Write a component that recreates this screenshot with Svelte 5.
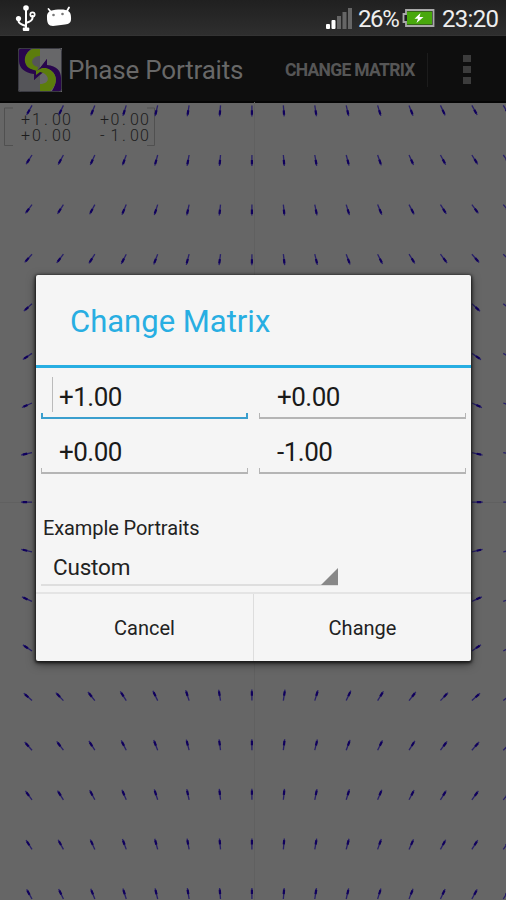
<script>
  const examples = ['Custom'];

  let matrix = ['+1.00', '+0.00', '+0.00', '-1.00'];
  let focused = 0;

  const plot = { width: 506, height: 798, top: 102 };
  const origin = { x: 253.7, y: 400.3 };
  const arrowLength = 11;

  // x positions of each glyph in the matrix readout
  const columnX = [
    [21, 32, 44, 52, 62],
    [100, 110.5, 122, 130, 140]
  ];

  function buildArrows() {
    const list = [];
    for (let row = 0; row <= 16; row++) {
      for (let col = 0; col <= 15; col++) {
        const x = 32 + col * 31.42;
        const y = 3.4 + row * 49.6;
        const dx = x - origin.x;
        const dy = origin.y - y;
        const size = Math.hypot(dx, dy) || 1;
        const ux = (dx / size) * arrowLength;
        const uy = (dy / size) * arrowLength;
        list.push({ x, y, mx: x + ux * 0.45, my: y + uy * 0.45, hx: x + ux * 0.85, hy: y + uy * 0.85, ex: x + ux, ey: y + uy });
      }
    }
    return list;
  }

  const arrows = buildArrows();
</script>

<div class="screen">
  <header class="status-bar">
    <div class="status-icons">
      <svg class="usb" width="22" height="28" viewBox="0 0 22 28">
        <path d="M11 4v20M3.500 15.500v1.500q0 3 7.500 5M17.500 11v3q0 3-6.500 5" fill="none" stroke="#fff" stroke-width="2" />
        <circle cx="11" cy="4" r="2.800" fill="#fff" />
        <circle cx="3.500" cy="14.500" r="2.600" fill="#fff" />
        <circle cx="17.500" cy="10.500" r="2.200" fill="none" stroke="#fff" stroke-width="1.700" />
        <rect x="7.800" y="23.500" width="6.500" height="3.500" rx="1" fill="#fff" />
      </svg>
      <svg class="droid" width="28" height="22" viewBox="0 0 28 22">
        <path d="M3.500 3 6 6M24 1.500 22 5" stroke="#fff" stroke-width="1.800" stroke-linecap="round" />
        <path d="M2 12C1.500 6 5 4 13 3.600C22 3 26 5 26 11C26.500 17 24 18 20 18.500L8 20C3.500 20 2 17 2 12Z" fill="#fff" />
        <circle cx="8.500" cy="9" r="1.300" fill="#777" />
        <circle cx="17.500" cy="8" r="1.300" fill="#777" />
      </svg>
    </div>
    <div class="status-info">
      <svg class="signal" width="28" height="22" viewBox="0 0 28 22">
        <rect x="1" y="16" width="4" height="5" rx="1" fill="#fff" />
        <rect x="6.500" y="12" width="4" height="9" rx="1" fill="#fff" />
        <rect x="12" y="8" width="4" height="13" fill="#666" />
        <rect x="17.500" y="4" width="4" height="17" fill="#666" />
        <rect x="23" y="0" width="4" height="21" fill="#666" />
      </svg>
      <span class="percent">26%</span>
      <svg class="battery" width="33" height="18" viewBox="0 0 33 18">
        <path d="M4 1H31.500V17H4V13H1.500V5H4Z" fill="#222" stroke="#aaa" stroke-width="1.800" />
        <rect x="5" y="2.500" width="25" height="13" fill="#48a80c" />
        <path d="M18.500 4 12.500 9.800H16L14.500 14 21.500 8H17.500Z" fill="#fff" />
      </svg>
      <span class="clock">23:20</span>
    </div>
  </header>

  <div class="action-bar">
    <svg class="logo" width="44" height="44" viewBox="0 0 44 44">
      <rect width="44" height="44" rx="2" fill="#555559" />
      <rect x="22" width="22" height="44" fill="#676769" />
      <path d="M1 1H13C5 7 6 18 14 21L20 23L29 11V21L16 32V26C7 25 1 20 1 13Z" fill="#29064d" />
      <path d="M22 1H15C4 5 5 18 13 21L19 23L20 19C11 17 13 8 22 8Z" fill="#5c7d0c" />
      <path d="M29 11V17C39 18 43 23 43 30V43H34C40 34 39 24 30 21L25 21L16 32V26L22 20Z" fill="#29064d" />
      <path d="M24 20H28C40 24 41 36 32 43H22V36C33 36 32 26 22 24L18 27V23Z" fill="#5c7d0c" />
      <rect x="0.500" y="0.500" width="43" height="43" rx="2" fill="none" stroke="#3a3a42" />
    </svg>
    <h1>Phase Portraits</h1>
    <button class="menu-action">CHANGE MATRIX</button>
    <button class="overflow" aria-label="More options">
      <i></i><i></i><i></i>
    </button>
  </div>

  <svg class="plot" width={plot.width} height={plot.height} viewBox="0 0 {plot.width} {plot.height}">
    <path class="axis" d="M0 400.500H506M254.500 0V798" />
    <g class="readout">
      <path d="M13 6H4.500V43.500H13M147 6H154.500V43.500H147" />
      {#each matrix as value, i}
        <text x={columnX[i % 2].join(' ')} y={i < 2 ? 22.500 : 39}>{value}</text>
      {/each}
    </g>
    {#each arrows as a}
      <line class="shaft" x1={a.x} y1={a.y} x2={a.ex} y2={a.ey} />
      <line class="head" x1={a.mx} y1={a.my} x2={a.hx} y2={a.hy} />
    {/each}
  </svg>

  <div class="overlay">
    <div class="dialog" role="dialog" aria-label="Change Matrix">
      <h2>Change Matrix</h2>
      <div class="body">
        <div class="fields">
          {#each matrix as value, i}
            <div class="field" class:focused={i === focused}>
              <span>{value}</span>
            </div>
          {/each}
        </div>
        <div class="label">Example Portraits</div>
        <div class="spinner">
          <span>{examples[0]}</span>
          <svg width="17" height="17" viewBox="0 0 17 17"><path d="M17 0V17H0Z" fill="#888" /></svg>
        </div>
      </div>
      <div class="buttons">
        <button>Cancel</button>
        <button>Change</button>
      </div>
    </div>
  </div>
</div>

<style>
  :global(body) {
    margin: 0;
    background: #666;
  }

  .screen {
    position: relative;
    width: 506px;
    height: 900px;
    overflow: hidden;
    font-family: Roboto, sans-serif;
    background: #666;
  }

  h1,
  h2 {
    margin: 0;
    font-weight: 400;
  }

  button {
    border: 0;
    padding: 0;
    background: none;
    font-family: inherit;
  }

  .status-bar {
    display: flex;
    justify-content: space-between;
    box-sizing: border-box;
    height: 36px;
    padding: 0 8px 0 15px;
    background: linear-gradient(#202020, #2e2e2e);
    border-bottom: 1px solid #333;
  }

  .status-icons {
    display: flex;
    gap: 8px;
  }

  .usb {
    margin-top: 4px;
  }

  .droid {
    margin-top: 6px;
  }

  .status-info {
    display: flex;
    align-items: center;
    height: 38px;
    color: #eee;
    font-size: 24px;
  }

  .signal {
    margin-right: 5px;
  }

  .percent {
    width: 44px;
    letter-spacing: -1.4px;
  }

  .battery {
    width: 33px;
    margin-right: 7px;
    margin-top: -2px;
  }

  .clock {
    width: 56px;
    letter-spacing: -0.7px;
  }

  .action-bar {
    display: flex;
    align-items: center;
    box-sizing: border-box;
    height: 67px;
    margin-bottom: -1px;
    padding: 2px 0 0 18px;
    background: #0e0e0e;
    border-bottom: 2px solid #050505;
  }

  .logo {
    margin-right: 6px;
  }

  h1 {
    width: 217px;
    color: #686868;
    font-size: 26px;
    letter-spacing: -0.2px;
    line-height: 36px;
    white-space: nowrap;
  }

  .menu-action {
    width: 143px;
    height: 34px;
    border-right: 1px solid #1c1c1c;
    color: #565656;
    font-size: 17.5px;
    font-weight: 700;
    letter-spacing: -0.7px;
    text-align: left;
    white-space: nowrap;
  }

  .overflow {
    display: flex;
    flex-direction: column;
    gap: 4px;
    margin-left: 35px;
  }

  .overflow i {
    width: 8px;
    height: 7px;
    background: #3c3c3c;
  }

  .plot {
    display: block;
  }

  .axis {
    fill: none;
    stroke: #606060;
  }

  .readout path {
    fill: none;
    stroke: #505050;
  }

  .readout text {
    fill: #1c1c1c;
    font-size: 16px;
    font-weight: 300;
  }

  .shaft {
    stroke: #28206a;
    stroke-width: 1.3;
  }

  .head {
    stroke: #10005c;
    stroke-width: 2.2;
  }

  .overlay {
    position: absolute;
    inset: 0;
    display: flex;
    justify-content: center;
    align-items: flex-start;
    padding: 275px 35px 0 36px;
  }

  .dialog {
    flex: 1;
    height: 386px;
    border-radius: 2px;
    background: #f5f5f5;
    box-shadow: 0 1px 3px 1px #181818, 0 3px 10px rgba(0, 0, 0, 0.5);
  }

  h2 {
    box-sizing: border-box;
    height: 93px;
    padding-left: 34px;
    border-bottom: 3px solid #28aee2;
    color: #28aee2;
    font-size: 31px;
    line-height: 93px;
    white-space: nowrap;
  }

  .body {
    box-sizing: border-box;
    height: 224px;
    padding: 2px 5px 0;
  }

  .fields {
    display: grid;
    grid-template-columns: 207px 207px;
    gap: 0 11px;
  }

  .field {
    height: 55px;
    display: flex;
    flex-direction: column;
    justify-content: flex-start;
    color: #1a1a1a;
    font-size: 26px;
    letter-spacing: -0.5px;
    line-height: 54px;
  }

  .field span {
    height: 43px;
    padding-left: 18px;
  }

  .field::after {
    content: '';
    height: 4px;
    border: solid #b5b5b5;
    border-width: 0 1px 2px;
  }

  .field.focused::after {
    border-color: #3a9fce;
    border-width: 0 2px 2px;
  }

  .field.focused span {
    background: linear-gradient(#bbb, #bbb) 11px 7px / 1px 35px no-repeat;
  }

  .label {
    margin: 34px 0 0 2px;
    color: #222;
    font-size: 20px;
    letter-spacing: -0.1px;
    line-height: 28px;
    white-space: nowrap;
  }

  .spinner {
    display: flex;
    justify-content: space-between;
    align-items: flex-end;
    box-sizing: border-box;
    width: 297px;
    height: 44px;
    padding-left: 12px;
    border-bottom: 2px solid #dedede;
    color: #222;
    font-size: 22.5px;
    letter-spacing: -0.2px;
    line-height: 33px;
  }

  .spinner svg {
    margin-bottom: -1px;
  }

  .buttons {
    display: grid;
    grid-template-columns: 217px 1fr;
    height: 69px;
    box-sizing: border-box;
    border-top: 2px solid #e4e4e4;
  }

  .buttons button {
    color: #222;
    font-size: 20px;
  }

  .buttons button + button {
    border-left: 1px solid #ddd;
  }
</style>
